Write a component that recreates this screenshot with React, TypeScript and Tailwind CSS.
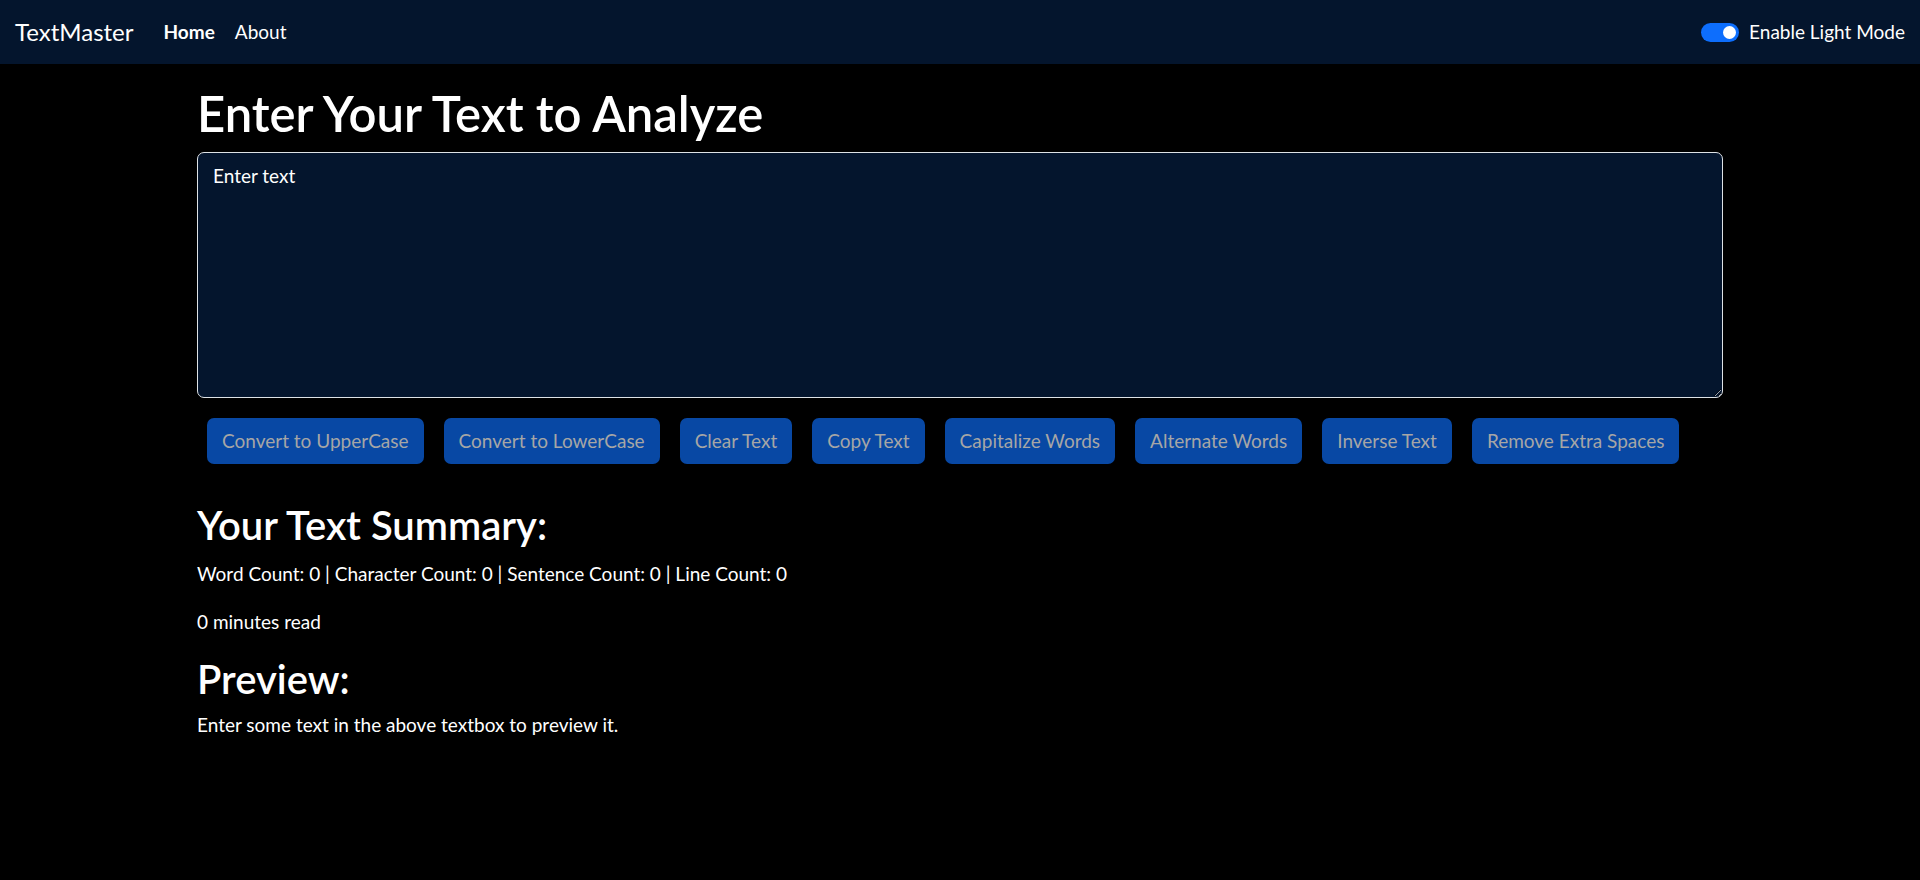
import { useState } from 'react';

// Tombol aksi di bawah textarea
const actions = [
  'Convert to UpperCase',
  'Convert to LowerCase',
  'Clear Text',
  'Copy Text',
  'Capitalize Words',
  'Alternate Words',
  'Inverse Text',
  'Remove Extra Spaces',
];

const Navbar = () => {
  return (
    <nav className="h-16 w-full flex items-center justify-between px-[15px] bg-[#04152d] text-white">
      <div className="flex items-center">
        <span className="text-[24px] mr-[20px]">TextMaster</span>
        <a className="px-[10px] text-[19px] font-bold" href="#">Home</a>
        <a className="px-[10px] text-[19px]" href="#">About</a>
      </div>
      <div className="flex items-center gap-[10px]">
        {/* switch aktif */}
        <div className="w-[38px] h-[19px] rounded-full bg-[#0d6efd] flex items-center justify-end px-[3px]">
          <div className="w-[13px] h-[13px] rounded-full bg-white" />
        </div>
        <span className="text-[19px]">Enable Light Mode</span>
      </div>
    </nav>
  );
};

export default function App() {
  const [text, setText] = useState('');

  return (
    <div className="min-h-[880px] bg-black text-white font-['Lato',sans-serif]">
      <Navbar />

      <div className="w-[1526px] mx-auto">
        <h1 className="mt-[19px] mb-[9px] text-[49px] leading-[60px] font-semibold">
          Enter Your Text to Analyze
        </h1>
        <textarea
          value={text}
          onChange={(e) => setText(e.target.value)}
          placeholder="Enter text"
          className="block w-full h-[246px] px-[15px] py-[8px] text-[19px] leading-[30px] bg-[#04152d] text-white placeholder:text-white border border-[#dee2e6] rounded-[7px] resize-y outline-none"
        />
        <div className="mt-[20px] flex">
          {actions.map((a) => (
            <button
              key={a}
              disabled
              className="mx-[10px] h-[46px] px-[15px] text-[19px] whitespace-nowrap rounded-[7px] bg-[#0848a4] text-[#a6a6a6]"
            >
              {a}
            </button>
          ))}
        </div>

        <h2 className="mt-[37px] mb-[10px] text-[40px] leading-[48px] font-semibold">Your Text Summary:</h2>
        <p className="mb-[18px] text-[19px] leading-[30px]">
          Word Count: 0 | Character Count: 0 | Sentence Count: 0 | Line Count: 0
        </p>
        <p className="mb-[18px] text-[19px] leading-[30px]">0 minutes read</p>

        <h2 className="mb-[7px] text-[40px] leading-[48px] font-semibold">Preview:</h2>
        <p className="text-[19px] leading-[30px]">Enter some text in the above textbox to preview it.</p>
      </div>
    </div>
  );
}
